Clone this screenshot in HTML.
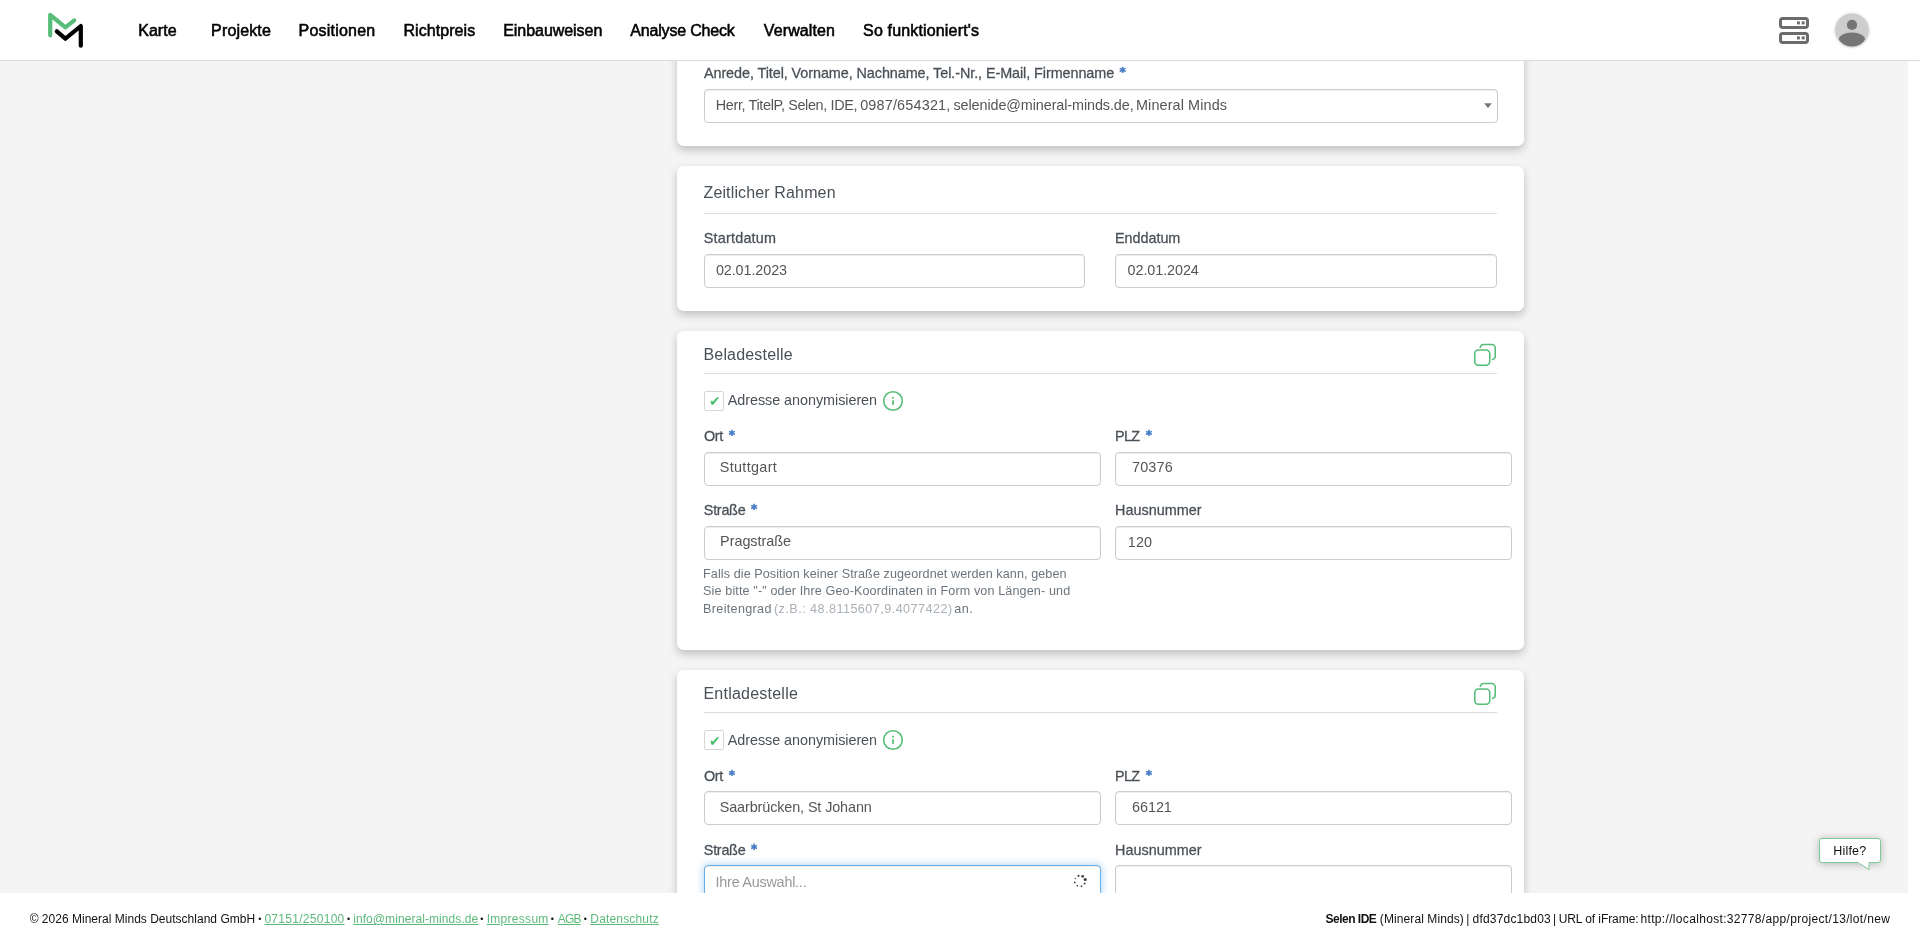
<!DOCTYPE html>
<html lang="de"><head><meta charset="utf-8"><title>Mineral Minds</title>
<style>
html,body{margin:0;padding:0;background:#fff;}
body{width:1920px;height:943px;position:relative;overflow:hidden;font-family:"Liberation Sans",sans-serif;}
.t{position:absolute;white-space:pre;line-height:1;font-family:"Liberation Sans",sans-serif;}
.abs{position:absolute;}
#txt{position:absolute;left:0;top:0;width:1920px;height:943px;will-change:transform;}
#main{position:absolute;left:0;top:61px;width:1908px;height:832px;background:#f4f4f4;overflow:hidden;}
.card{position:absolute;left:677px;width:847px;background:#fff;border-radius:6.5px;box-shadow:0 4px 9px rgba(0,0,0,.22);}
.in{position:absolute;box-sizing:border-box;border:1px solid #ccc;border-radius:4px;background:#fff;height:34px;box-shadow:inset 0 1px 1px rgba(0,0,0,.075);}
.hr{position:absolute;left:704px;width:793px;height:1px;background:#dcdcdc;}
.cb{position:absolute;box-sizing:border-box;width:19.5px;height:19.5px;border:1px solid #d6d6d6;border-radius:2px;background:#fff;}
#hdr{position:absolute;left:0;top:0;width:1920px;height:60px;background:#fff;border-bottom:1px solid #dcdcdc;}
#ftr{position:absolute;left:0;top:893px;width:1920px;height:50px;background:#fff;}
</style></head><body>
<div id="main"><div class="card" style="top:-100px;height:184.8px"></div><div class="in" style="left:704px;top:28.0px;width:794.0px;"></div><svg class="abs" style="left:1483px;top:41px" width="10" height="8" viewBox="0 0 10 8"><path d="M1.2 1.2h7.6L5 6.3z" fill="#777"/></svg><div class="card" style="top:104.7px;height:144.9px"></div><div class="hr" style="top:152px"></div><div class="in" style="left:704px;top:193.0px;width:381.0px;"></div><div class="in" style="left:1115px;top:193.0px;width:382.0px;"></div><div class="card" style="top:269.7px;height:319.3px"></div><div class="hr" style="top:312px"></div><svg class="abs" style="left:1470px;top:279.0px" width="30" height="30" viewBox="0 0 30 30" fill="none" stroke="#55bd77" stroke-width="1.55" stroke-linecap="round" stroke-linejoin="round"><rect x="4.75" y="10" width="15" height="15.2" rx="3.6"/><path d="M10.25 7.4a3.5 3.5 0 0 1 3.5-2.9h8a3.5 3.5 0 0 1 3.5 3.5v8a3.5 3.5 0 0 1-2.7 3.4"/></svg><div class="cb" style="left:704.2px;top:330.2px"></div><span class="t" style="left:708.7px;top:333.4px;font-size:14px;color:#4cc070;font-family:'DejaVu Sans',sans-serif;will-change:transform;">✔</span><svg class="abs" style="left:880.8px;top:328.0px" width="24" height="24" viewBox="0 0 24 24" fill="none"><circle cx="12" cy="12" r="9.3" stroke="#55bd77" stroke-width="1.6"/><rect x="11.1" y="7.9" width="1.8" height="1.7" fill="#55bd77"/><rect x="11.1" y="11.3" width="1.8" height="4.5" fill="#55bd77"/></svg><div class="in" style="left:704px;top:391.0px;width:397.0px;"></div><div class="in" style="left:1115px;top:391.0px;width:397.0px;"></div><div class="in" style="left:704px;top:465.0px;width:397.0px;"></div><div class="in" style="left:1115px;top:465.0px;width:397.0px;"></div><div class="card" style="top:608.8px;height:319.3px"></div><div class="hr" style="top:651px"></div><svg class="abs" style="left:1470px;top:618.1px" width="30" height="30" viewBox="0 0 30 30" fill="none" stroke="#55bd77" stroke-width="1.55" stroke-linecap="round" stroke-linejoin="round"><rect x="4.75" y="10" width="15" height="15.2" rx="3.6"/><path d="M10.25 7.4a3.5 3.5 0 0 1 3.5-2.9h8a3.5 3.5 0 0 1 3.5 3.5v8a3.5 3.5 0 0 1-2.7 3.4"/></svg><div class="cb" style="left:704.2px;top:669.3px"></div><span class="t" style="left:708.7px;top:672.5px;font-size:14px;color:#4cc070;font-family:'DejaVu Sans',sans-serif;will-change:transform;">✔</span><svg class="abs" style="left:880.8px;top:667.1px" width="24" height="24" viewBox="0 0 24 24" fill="none"><circle cx="12" cy="12" r="9.3" stroke="#55bd77" stroke-width="1.6"/><rect x="11.1" y="7.9" width="1.8" height="1.7" fill="#55bd77"/><rect x="11.1" y="11.3" width="1.8" height="4.5" fill="#55bd77"/></svg><div class="in" style="left:704px;top:730.0px;width:397.0px;"></div><div class="in" style="left:1115px;top:730.0px;width:397.0px;"></div><div class="in" style="left:704px;top:804.0px;width:397.0px;border-color:#66afe9;box-shadow:inset 0 1px 1px rgba(0,0,0,.075),0 0 8px rgba(102,175,233,.6);"></div><div class="in" style="left:1115px;top:804.0px;width:397.0px;"></div><svg class="abs" style="left:1071.4px;top:811.4px" width="18" height="18" viewBox="0 0 18 18"><circle cx="14.19" cy="7.51" r="1.6" fill="#3a3a3a"/><circle cx="13.72" cy="11.62" r="1.05" fill="#555"/><circle cx="10.49" cy="14.19" r="0.95" fill="#555"/><circle cx="6.38" cy="13.72" r="0.9" fill="#555"/><circle cx="3.81" cy="10.49" r="0.95" fill="#555"/><circle cx="4.28" cy="6.38" r="0.75" fill="#666"/><circle cx="7.51" cy="3.81" r="1.1" fill="#444"/><circle cx="11.62" cy="4.28" r="1.4" fill="#444"/></svg><div class="abs" style="left:1818.5px;top:777.3px;width:62.5px;height:24.6px;box-sizing:border-box;border:1px solid #7fcb97;border-radius:3px;background:#fff;box-shadow:0 1px 8px rgba(0,0,0,.27);"></div>
<svg class="abs" style="left:1856px;top:800.6px" width="16" height="10" viewBox="0 0 16 10"><path d="M2.3 0.7L13 7.6V0.7" fill="#fff" stroke="#7fcb97" stroke-width="1" stroke-linejoin="round"/><rect x="2.6" y="0" width="10" height="1.2" fill="#fff"/></svg></div><div id="hdr"></div><svg class="abs" style="left:40px;top:5px" width="50" height="50" viewBox="40 5 50 50" fill="none" stroke-width="4.2" stroke-linecap="round" stroke-linejoin="round"><path d="M50.2 35.3V14.8L65.4 27.3L74.2 20.4" stroke="#57bd78"/><path d="M56.8 31.3L65.4 38.7L80.8 26V45.7" stroke="#000"/></svg><svg class="abs" style="left:1774px;top:12px" width="40" height="36" viewBox="1774 12 40 36" fill="none"><g stroke="#6c6c6c" stroke-width="3"><rect x="1780.5" y="18.5" width="27" height="9" rx="2.2"/><rect x="1780.5" y="33.5" width="27" height="9" rx="2.2"/></g><g fill="#6c6c6c"><rect x="1797" y="21.4" width="2.9" height="3"/><rect x="1801.7" y="21.4" width="3" height="3"/><rect x="1797" y="36.4" width="2.9" height="3"/><rect x="1801.7" y="36.4" width="3" height="3"/></g></svg><svg class="abs" style="left:1832px;top:10px" width="40" height="40" viewBox="0 0 40 40"><defs><clipPath id="av"><circle cx="20" cy="20.2" r="16.2"/></clipPath><filter id="avb" x="-20%" y="-20%" width="140%" height="140%"><feGaussianBlur stdDeviation="1.8"/></filter></defs><circle cx="20" cy="20.3" r="16.4" fill="#000" opacity=".35" filter="url(#avb)"/><circle cx="20" cy="20.2" r="16.2" fill="#cdcdcd"/><g clip-path="url(#av)" fill="#757575"><circle cx="20" cy="14.9" r="5.1"/><ellipse cx="19.9" cy="29.7" rx="13.1" ry="7.3"/></g></svg><div id="ftr"></div><div id="txt"><span class="t" style="left:138.18px;top:23.00px;font-size:16px;color:#000;-webkit-text-stroke:0.28px currentColor;letter-spacing:0.062px;-webkit-text-stroke:0.55px #000;">Karte</span>
<span class="t" style="left:211.08px;top:23.00px;font-size:16px;color:#000;-webkit-text-stroke:0.28px currentColor;letter-spacing:0.157px;-webkit-text-stroke:0.55px #000;">Projekte</span>
<span class="t" style="left:298.58px;top:23.00px;font-size:16px;color:#000;-webkit-text-stroke:0.28px currentColor;letter-spacing:0.215px;-webkit-text-stroke:0.55px #000;">Positionen</span>
<span class="t" style="left:403.38px;top:23.00px;font-size:16px;color:#000;-webkit-text-stroke:0.28px currentColor;letter-spacing:0.075px;-webkit-text-stroke:0.55px #000;">Richtpreis</span>
<span class="t" style="left:503.18px;top:23.00px;font-size:16px;color:#000;-webkit-text-stroke:0.28px currentColor;letter-spacing:-0.043px;-webkit-text-stroke:0.55px #000;">Einbauweisen</span>
<span class="t" style="left:630.30px;top:23.00px;font-size:16px;color:#000;-webkit-text-stroke:0.28px currentColor;letter-spacing:-0.185px;-webkit-text-stroke:0.55px #000;">Analyse Check</span>
<span class="t" style="left:763.80px;top:23.00px;font-size:16px;color:#000;-webkit-text-stroke:0.28px currentColor;letter-spacing:0.116px;-webkit-text-stroke:0.55px #000;">Verwalten</span>
<span class="t" style="left:863.09px;top:23.00px;font-size:16px;color:#000;-webkit-text-stroke:0.28px currentColor;letter-spacing:0.158px;-webkit-text-stroke:0.55px #000;">So funktioniert's</span>
<span class="t" style="left:703.95px;top:66.00px;font-size:14.4px;color:#495057;-webkit-text-stroke:0.28px currentColor;letter-spacing:-0.075px;">Anrede, Titel, Vorname, Nachname, Tel.-Nr., E-Mail, Firmenname</span>
<span class="t" style="left:1119.61px;top:66.00px;font-size:12px;color:#4078c2;font-weight:700;font-family:'DejaVu Sans',sans-serif;-webkit-text-stroke:0.5px #4078c2;">*</span>
<span class="t" style="left:715.79px;top:98.00px;font-size:14.4px;color:#555;letter-spacing:-0.350px;">Herr, TitelP, Selen, IDE,</span>
<span class="t" style="left:860.18px;top:98.00px;font-size:14.4px;color:#555;letter-spacing:0.188px;">0987/654321,</span>
<span class="t" style="left:953.51px;top:98.00px;font-size:14.4px;color:#555;letter-spacing:-0.097px;">selenide@mineral-minds.de,</span>
<span class="t" style="left:1135.99px;top:98.00px;font-size:14.4px;color:#555;letter-spacing:0.116px;">Mineral Minds</span>
<span class="t" style="left:703.47px;top:185.00px;font-size:16px;color:#495057;letter-spacing:0.141px;">Zeitlicher Rahmen</span>
<span class="t" style="left:703.82px;top:231.00px;font-size:14.4px;color:#495057;-webkit-text-stroke:0.28px currentColor;letter-spacing:0.196px;">Startdatum</span>
<span class="t" style="left:1114.98px;top:231.00px;font-size:14.4px;color:#495057;-webkit-text-stroke:0.28px currentColor;letter-spacing:-0.033px;">Enddatum</span>
<span class="t" style="left:715.88px;top:263.00px;font-size:14.4px;color:#555;letter-spacing:-0.089px;">02.01.2023</span>
<span class="t" style="left:1127.58px;top:263.00px;font-size:14.4px;color:#555;letter-spacing:-0.088px;">02.01.2024</span>
<span class="t" style="left:703.47px;top:347.00px;font-size:16px;color:#495057;letter-spacing:0.176px;">Beladestelle</span>
<span class="t" style="left:727.75px;top:393.00px;font-size:14.4px;color:#495057;letter-spacing:-0.053px;">Adresse anonymisieren</span>
<span class="t" style="left:703.96px;top:429.00px;font-size:14.4px;color:#495057;-webkit-text-stroke:0.28px currentColor;letter-spacing:-0.349px;">Ort</span>
<span class="t" style="left:1115.08px;top:429.00px;font-size:14.4px;color:#495057;-webkit-text-stroke:0.28px currentColor;letter-spacing:-0.661px;">PLZ</span>
<span class="t" style="left:728.81px;top:429.00px;font-size:12px;color:#4078c2;font-weight:700;font-family:'DejaVu Sans',sans-serif;-webkit-text-stroke:0.5px #4078c2;">*</span>
<span class="t" style="left:1145.81px;top:429.00px;font-size:12px;color:#4078c2;font-weight:700;font-family:'DejaVu Sans',sans-serif;-webkit-text-stroke:0.5px #4078c2;">*</span>
<span class="t" style="left:751.11px;top:503.00px;font-size:12px;color:#4078c2;font-weight:700;font-family:'DejaVu Sans',sans-serif;-webkit-text-stroke:0.5px #4078c2;">*</span>
<span class="t" style="left:719.72px;top:460.00px;font-size:14.4px;color:#555;letter-spacing:0.338px;">Stuttgart</span>
<span class="t" style="left:1131.96px;top:460.00px;font-size:14.4px;color:#555;letter-spacing:0.188px;">70376</span>
<span class="t" style="left:703.82px;top:503.00px;font-size:14.4px;color:#495057;-webkit-text-stroke:0.28px currentColor;letter-spacing:-0.271px;">Straße</span>
<span class="t" style="left:1115.08px;top:503.00px;font-size:14.4px;color:#495057;-webkit-text-stroke:0.28px currentColor;letter-spacing:0.003px;">Hausnummer</span>
<span class="t" style="left:720.09px;top:534.00px;font-size:14.4px;color:#555;letter-spacing:-0.027px;">Pragstraße</span>
<span class="t" style="left:1127.79px;top:535.00px;font-size:14.4px;color:#555;letter-spacing:0.099px;">120</span>
<span class="t" style="left:703.47px;top:686.00px;font-size:16px;color:#495057;letter-spacing:0.228px;">Entladestelle</span>
<span class="t" style="left:727.75px;top:733.00px;font-size:14.4px;color:#495057;letter-spacing:-0.053px;">Adresse anonymisieren</span>
<span class="t" style="left:703.96px;top:769.00px;font-size:14.4px;color:#495057;-webkit-text-stroke:0.28px currentColor;letter-spacing:-0.349px;">Ort</span>
<span class="t" style="left:1115.08px;top:769.00px;font-size:14.4px;color:#495057;-webkit-text-stroke:0.28px currentColor;letter-spacing:-0.661px;">PLZ</span>
<span class="t" style="left:728.81px;top:769.00px;font-size:12px;color:#4078c2;font-weight:700;font-family:'DejaVu Sans',sans-serif;-webkit-text-stroke:0.5px #4078c2;">*</span>
<span class="t" style="left:1145.81px;top:769.00px;font-size:12px;color:#4078c2;font-weight:700;font-family:'DejaVu Sans',sans-serif;-webkit-text-stroke:0.5px #4078c2;">*</span>
<span class="t" style="left:751.11px;top:843.00px;font-size:12px;color:#4078c2;font-weight:700;font-family:'DejaVu Sans',sans-serif;-webkit-text-stroke:0.5px #4078c2;">*</span>
<span class="t" style="left:719.72px;top:800.00px;font-size:14.4px;color:#555;letter-spacing:-0.110px;">Saarbrücken, St Johann</span>
<span class="t" style="left:1131.93px;top:800.00px;font-size:14.4px;color:#555;letter-spacing:-0.019px;">66121</span>
<span class="t" style="left:703.82px;top:843.00px;font-size:14.4px;color:#495057;-webkit-text-stroke:0.28px currentColor;letter-spacing:-0.271px;">Straße</span>
<span class="t" style="left:1115.08px;top:843.00px;font-size:14.4px;color:#495057;-webkit-text-stroke:0.28px currentColor;letter-spacing:0.003px;">Hausnummer</span>
<span class="t" style="left:715.55px;top:875.00px;font-size:14.4px;color:#999;letter-spacing:-0.236px;">Ihre Auswahl...</span>
<span class="t" style="left:703.10px;top:568.00px;font-size:12.6px;color:#6c757d;letter-spacing:0.081px;">Falls die Position keiner Straße zugeordnet werden kann, geben</span>
<span class="t" style="left:703.10px;top:585.00px;font-size:12.6px;color:#6c757d;letter-spacing:0.119px;">Sie bitte "-" oder Ihre Geo-Koordinaten in Form von Längen- und</span>
<span class="t" style="left:703.10px;top:603.00px;font-size:12.6px;color:#6c757d;letter-spacing:0.323px;">Breitengrad</span>
<span class="t" style="left:773.98px;top:603.00px;font-size:12.6px;color:#a9b0b7;letter-spacing:0.459px;">(z.B.: 48.8115607,9.4077422)</span>
<span class="t" style="left:954.30px;top:603.00px;font-size:12.6px;color:#6c757d;letter-spacing:0.432px;">an.</span>
<span class="t" style="left:29.65px;top:913.00px;font-size:12px;color:#111;letter-spacing:0.015px;">© 2026 Mineral Minds Deutschland GmbH</span>
<span class="t" style="left:258.26px;top:915.00px;font-size:9px;color:#111;">•</span>
<span class="t" style="left:264.39px;top:913.00px;font-size:12px;color:#5cb97a;letter-spacing:0.286px;text-decoration:underline">07151/250100</span>
<span class="t" style="left:347.06px;top:915.00px;font-size:9px;color:#111;">•</span>
<span class="t" style="left:353.20px;top:913.00px;font-size:12px;color:#5cb97a;letter-spacing:0.075px;text-decoration:underline">info@mineral-minds.de</span>
<span class="t" style="left:480.16px;top:915.00px;font-size:9px;color:#111;">•</span>
<span class="t" style="left:486.67px;top:913.00px;font-size:12px;color:#5cb97a;letter-spacing:0.294px;text-decoration:underline">Impressum</span>
<span class="t" style="left:550.66px;top:915.00px;font-size:9px;color:#111;">•</span>
<span class="t" style="left:557.86px;top:913.00px;font-size:12px;color:#5cb97a;letter-spacing:-0.866px;text-decoration:underline">AGB</span>
<span class="t" style="left:583.66px;top:915.00px;font-size:9px;color:#111;">•</span>
<span class="t" style="left:590.30px;top:913.00px;font-size:12px;color:#5cb97a;letter-spacing:0.166px;text-decoration:underline">Datenschutz</span>
<span class="t" style="left:1325.59px;top:913.00px;font-size:12px;color:#111;font-weight:700;letter-spacing:-0.519px;">Selen IDE</span>
<span class="t" style="left:1379.81px;top:913.00px;font-size:12px;color:#111;letter-spacing:0.097px;">(Mineral Minds)</span>
<span class="t" style="left:1466.20px;top:913.00px;font-size:12px;color:#111;">|</span>
<span class="t" style="left:1472.57px;top:913.00px;font-size:12px;color:#111;letter-spacing:0.186px;">dfd37dc1bd03</span>
<span class="t" style="left:1553.10px;top:913.00px;font-size:12px;color:#111;">|</span>
<span class="t" style="left:1558.70px;top:913.00px;font-size:12px;color:#111;letter-spacing:-0.080px;">URL of iFrame:</span>
<span class="t" style="left:1640.47px;top:913.00px;font-size:12px;color:#111;letter-spacing:0.331px;">http://localhost:32778/app/project/13/lot/new</span>
<span class="t" style="left:1833.30px;top:845.00px;font-size:12.5px;color:#111;letter-spacing:0.179px;">Hilfe?</span></div>
</body></html>
